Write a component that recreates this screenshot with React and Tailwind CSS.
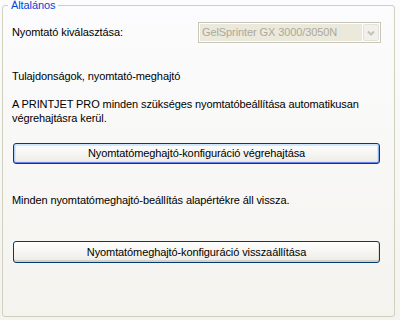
import React from 'react';

export default function App() {
  return (
    <div className="w-[400px] h-[320px] overflow-hidden bg-gradient-to-b from-[#FCFCFE] to-[#F4F3EE] text-[11px] tracking-[-0.1px] text-black font-['Liberation_Sans',Arial,sans-serif] pl-[2px]">
      {/* Group box */}
      <fieldset className="w-[393px] h-[317px] border border-[#D0D0BF] rounded-[3px] pl-[9px] pr-[13px]">
        <legend className="ml-[-4px] px-[3px] leading-[10px] text-[#0046D5]">Általános</legend>

        {/* Printer select row */}
        <div className="mt-[12px] flex items-center justify-between h-[21px]">
          <span className="leading-[13px]">Nyomtató kiválasztása:</span>
          <div className="w-[183px] h-[21px] border border-[#C9C7BA] bg-white flex items-stretch p-px gap-px">
            <div className="flex-1 bg-[#EBE9DB] text-[#ACA899] leading-[17px] pl-[2px] whitespace-nowrap overflow-hidden">
              GelSprinter GX 3000/3050N
            </div>
            <div className="w-[16px] bg-[#F1F0EA] border border-[#E4E2D8] rounded-[2px] flex items-center justify-center">
              <svg width="8" height="6" viewBox="0 0 8 6">
                <path d="M1 1.5 L4 4.5 L7 1.5" fill="none" stroke="#C4C3B8" strokeWidth="2" />
              </svg>
            </div>
          </div>
        </div>

        <div className="mt-[27px] leading-[13px]">Tulajdonságok, nyomtató-meghajtó</div>

        <p className="mt-[14px] leading-[14px]">
          A PRINTJET PRO minden szükséges nyomtatóbeállítása automatikusan végrehajtásra kerül.
        </p>

        <button className="mt-[18px] ml-[1px] w-[367px] h-[21px] border border-[#003C74] rounded-[3px] bg-gradient-to-b from-white to-[#ECEBE6] shadow-[inset_0_1px_0_#CEE7FF,inset_0_-1px_0_#6982EE,inset_1px_0_0_#B8D2F8,inset_-1px_0_0_#89ADE4,inset_0_0_0_2px_#D8E6FA] leading-[13px] text-black flex items-center justify-center">
          Nyomtatómeghajtó-konfiguráció végrehajtása
        </button>

        <div className="mt-[30px] leading-[13px]">Minden nyomtatómeghajtó-beállítás alapértékre áll vissza.</div>

        <button className="mt-[34px] ml-[1px] w-[367px] h-[22px] border border-[#003C74] rounded-[3px] bg-gradient-to-b from-white to-[#ECEBE6] shadow-[inset_0_-2px_0_#D6D0C5,inset_-1px_0_0_#E3E0D6] leading-[13px] text-black flex items-center justify-center">
          Nyomtatómeghajtó-konfiguráció visszaállítása
        </button>
      </fieldset>
    </div>
  );
}
